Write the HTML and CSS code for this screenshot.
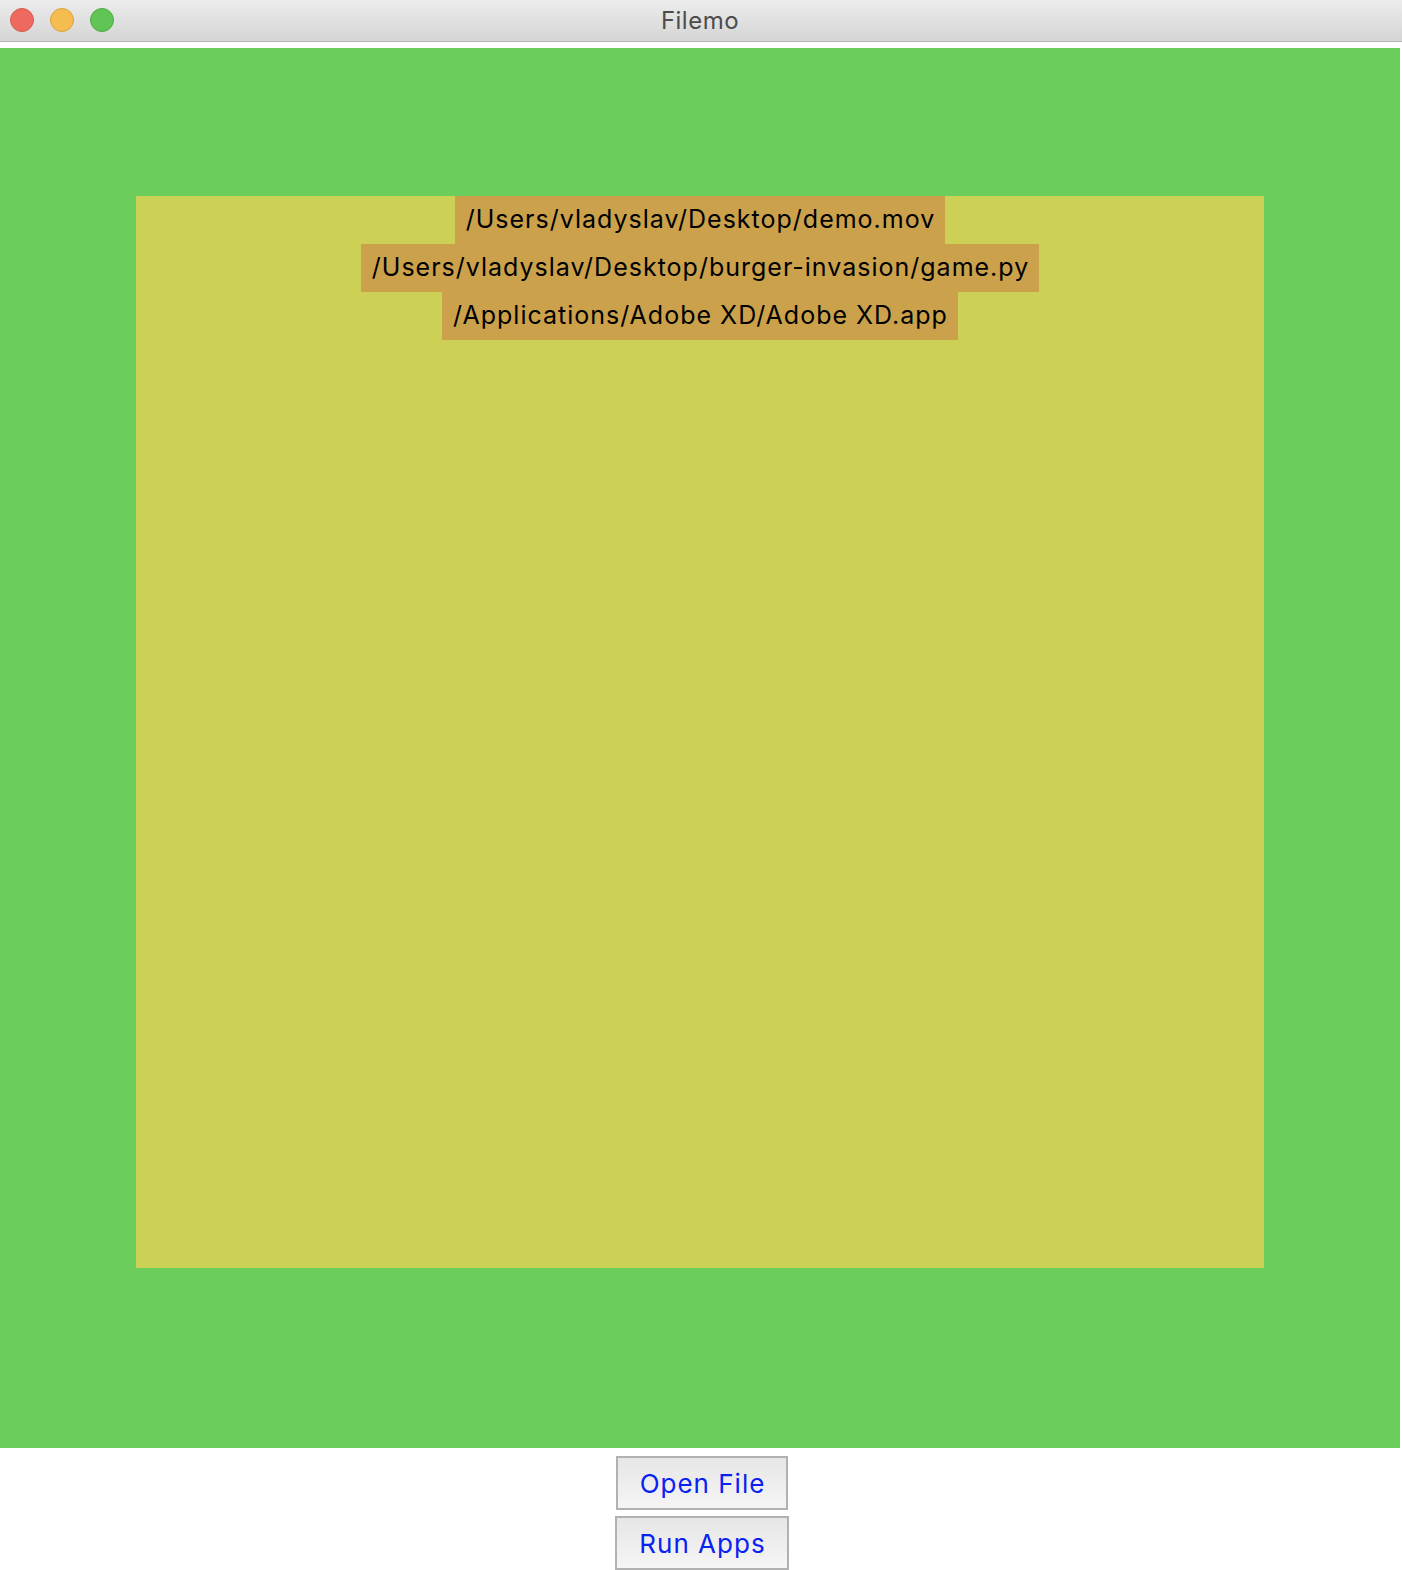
FILE: index.html
```html
<!DOCTYPE html>
<html>
<head>
<meta charset="utf-8">
<title>Filemo</title>
<link rel="stylesheet" href="styles.css">
</head>
<body>
<div class="window">
  <header class="titlebar">
    <div class="lights">
      <span class="light red"></span>
      <span class="light yellow"></span>
      <span class="light green"></span>
    </div>
    <div class="title">Filemo</div>
  </header>
  <main class="stage">
    <div class="dropzone">
      <div class="item">/Users/vladyslav/Desktop/demo.mov</div>
      <div class="item">/Users/vladyslav/Desktop/burger-invasion/game.py</div>
      <div class="item">/Applications/Adobe XD/Adobe XD.app</div>
    </div>
  </main>
  <div class="actions">
    <button class="btn">Open File</button>
    <button class="btn">Run Apps</button>
  </div>
</div>
</body>
</html>
```
FILE: styles.css
```css
html, body {
  margin: 0;
  padding: 0;
  background: #ffffff;
}
body {
  width: 1402px;
  height: 1570px;
  overflow: hidden;
  font-family: Inter, "Liberation Sans", Arial, sans-serif;
}
.window {
  display: flex;
  flex-direction: column;
}
.titlebar {
  position: relative;
  height: 41px;
  border-bottom: 1px solid #b6b6b6;
  background: linear-gradient(#ececec, #d5d5d5);
  display: flex;
  align-items: center;
  justify-content: center;
}
.lights {
  position: absolute;
  left: 10px;
  top: 8px;
  display: flex;
  gap: 16px;
}
.light {
  width: 24px;
  height: 24px;
  border-radius: 50%;
  box-sizing: border-box;
}
.light.red { background: #ee6a5f; border: 1px solid #d65a50; }
.light.yellow { background: #f5bd4f; border: 1px solid #dba33a; }
.light.green { background: #61c555; border: 1px solid #4faa43; }
.title {
  font-size: 24px;
  color: #4c4c4c;
  margin-left: -2px;
  letter-spacing: 0.5px;
}
.stage {
  margin-top: 6px;
  width: 1400px;
  height: 1400px;
  box-sizing: border-box;
  padding: 148px 136px 180px;
  background: #6bcd5c;
}
.dropzone {
  height: 100%;
  background: #ccd155;
  display: flex;
  flex-direction: column;
  align-items: center;
}
.item {
  height: 48px;
  line-height: 46px;
  padding: 0 10px 0 11px;
  background: #cba24b;
  color: #000;
  font-size: 25px;
  letter-spacing: 1px;
  white-space: nowrap;
}
.actions {
  margin-top: 8px;
  display: flex;
  flex-direction: column;
  align-items: center;
  gap: 6px;
}
.btn {
  height: 54px;
  padding: 0 21px 0 22px;
  border: 2px solid #b1b1b1;
  border-radius: 0;
  background: linear-gradient(#e6e6e6, #f5f5f5);
  color: #0a22f0;
  font-family: Inter, "Liberation Sans", Arial, sans-serif;
  font-size: 26px;
  letter-spacing: 1px;
  margin-left: 2px;
}
```
